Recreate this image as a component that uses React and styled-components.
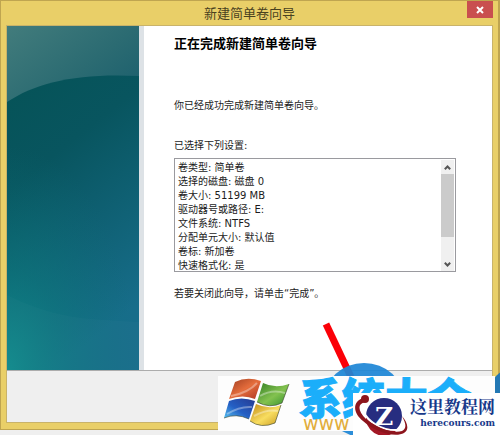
import React from 'react'
import styled, { createGlobalStyle } from 'styled-components'

const GlobalStyle = createGlobalStyle`
    *{
        box-sizing: border-box;
    }
    body{
        margin: 0;
        background: #efefef;
        color: #1c1c1c;
        font-family: "DejaVu Sans", "Noto Sans CJK SC", sans-serif;
        font-size: 10px;
        line-height: 14px;
    }
`;

const PageStyles = styled.div`
    position: relative;
    overflow: hidden;
    padding-bottom: 6px;
`;

const WindowStyles = styled.main`
    padding: 0 5px 6px;
    border: 1px solid #bfa550;
    border-right-width: 2px;
    background: #e9cf68;
`;

const TitleBar = styled.header`
    display: grid;
    grid-template-columns: 1fr auto 1fr;
    height: 25px;
    border-bottom: 1px solid #c9b36a;
    h1{
        margin: 0;
        padding-top: 2px;
        color: #4a421f;
        font-family: "Noto Sans CJK SC", sans-serif;
        font-size: 13px;
        font-weight: 400;
        line-height: 20px;
    }
`;

const CloseButton = styled.button`
    display: flex;
    align-items: center;
    justify-content: center;
    grid-column: 3;
    justify-self: end;
    width: 26px;
    height: 17px;
    padding: 0;
    border: 0;
    background: #c94f4f;
`;

const Client = styled.div`
    border: 0 solid #c9b36a;
    border-width: 0 1px 1px;
    background: #fff;
`;

const WizardBody = styled.div`
    display: flex;
    border-bottom: 1px solid #acacac;
`;

const BannerArt = styled.svg`
    flex: none;
    width: 137px;
    border-right: 5px solid #dde2e6;
    background: #fff;
`;

const WizardContent = styled.section`
    flex: 1;
    padding: 7px 36px 69px 30px;
    h2{
        margin: 0 0 46px;
        color: #000;
        font-family: "Noto Sans CJK SC", sans-serif;
        font-size: 13px;
        font-weight: 700;
        line-height: 20px;
    }
    p{
        margin: 0;
    }
    label{
        display: block;
        margin: 26px 0 5px;
    }
`;

const SettingsBox = styled.div`
    display: flex;
    height: 114px;
    margin-bottom: 15px;
    border: 1px solid #9a9a9f;
    textarea{
        flex: 1;
        min-width: 0;
        padding: 2px 3px 0;
        border: 0;
        outline: 0;
        resize: none;
        overflow: hidden;
        background: #fff;
        color: inherit;
        font: inherit;
    }
`;

const ScrollBar = styled.div`
    display: flex;
    flex-direction: column;
    width: 13px;
    margin: 1px 1px 0 0;
    background: #f0f0f0;
`;

const ScrollButton = styled.button`
    display: flex;
    align-items: center;
    justify-content: center;
    height: 14px;
    padding: 0;
    border: 0;
    background: transparent;
`;

const ScrollTrack = styled.div`
    flex: 1;
    &::before{
        content: "";
        display: block;
        height: 76%;
        background: #cbcbcb;
    }
`;

const WizardFooter = styled.footer`
    height: 51px;
    background: #efefef;
`;

const PointerArt = styled.svg`
    position: absolute;
    right: 0;
    bottom: 0;
    width: 180px;
    height: 115px;
`;

const SiteMark = styled.div`
    position: absolute;
    right: 5px;
    bottom: 5px;
    display: flex;
    width: 277px;
    height: 55px;
    padding-left: 5px;
    overflow: hidden;
    background: #fdfdfd;
    white-space: nowrap;
    svg{
        flex: none;
    }
`;

const SiteName = styled.div`
    margin-left: 8px;
    color: #1baefa;
    font-family: "Noto Sans CJK SC", sans-serif;
    font-size: 43px;
    font-weight: 900;
    line-height: 40px;
    -webkit-text-stroke: 1px #1baefa;
    small{
        display: block;
        padding-left: 4px;
        color: #e2ad3c;
        font-family: "DejaVu Sans", sans-serif;
        font-size: 19px;
        font-weight: 400;
        line-height: 14px;
        -webkit-text-stroke: 0;
    }
`;

const CourseMark = styled.div`
    position: absolute;
    right: 0;
    bottom: 0;
    display: flex;
    width: 147px;
    height: 43px;
    background: #fff;
    svg{
        flex: none;
    }
`;

const CourseName = styled.div`
    flex: 1;
    padding-top: 3px;
    color: #17398a;
    font-family: "Noto Serif CJK SC", "Noto Sans CJK SC", serif;
    font-size: 17px;
    font-weight: 700;
    line-height: 20px;
    text-align: right;
    padding-right: 5px;
    white-space: nowrap;
    small{
        display: block;
        font-family: "DejaVu Serif", serif;
        font-size: 9px;
        line-height: 14px;
    }
`;

const settings = [
  '卷类型: 简单卷',
  '选择的磁盘: 磁盘 0',
  '卷大小: 51199 MB',
  '驱动器号或路径: E:',
  '文件系统: NTFS',
  '分配单元大小: 默认值',
  '卷标: 新加卷',
  '快速格式化: 是',
]

function Banner() {
  return (
    <BannerArt viewBox="0 0 132 344" preserveAspectRatio="none" aria-hidden="true">
        <defs>
            <linearGradient id="sky" x1="0" y1="0" x2="1" y2="1">
                <stop offset="0" stopColor="#427c7c"/>
                <stop offset=".5" stopColor="#2b6b72"/>
                <stop offset="1" stopColor="#14596b"/>
            </linearGradient>
            <linearGradient id="hill" x1="0" y1="0" x2=".35" y2="1">
                <stop offset="0" stopColor="#055357"/>
                <stop offset=".35" stopColor="#08555f"/>
                <stop offset="1" stopColor="#176d8a"/>
            </linearGradient>
            <radialGradient id="glow" cx="0" cy="1" r="1">
                <stop offset="0" stopColor="#118a8c"/>
                <stop offset=".45" stopColor="#0c8080" stopOpacity=".45"/>
                <stop offset="1" stopColor="#0c7078" stopOpacity="0"/>
            </radialGradient>
        </defs>
        <rect width="132" height="100" fill="url(#sky)"/>
        <path d="M0 76C30 56 71 47 132 50V344H0Z" fill="url(#hill)"/>
        <rect y="120" width="132" height="224" fill="url(#glow)"/>
        <path d="M0 269Q42 290 85 293T132 296V344H0Z" fill="#fff" opacity=".02"/>
    </BannerArt>
  )
}

function Chevron({ down }) {
  return (
    <svg width="7" height="5" viewBox="0 0 7 5" aria-hidden="true">
        <path d={down ? 'M.8 .8 3.5 3.5 6.2 .8' : 'M.8 4.2 3.5 1.5 6.2 4.2'} fill="none" stroke="#555" strokeWidth="2"/>
    </svg>
  )
}

function FlagLogo() {
  return (
    <svg width="68" height="55" viewBox="0 0 68 55" aria-hidden="true">
        <defs>
            <linearGradient id="red" x1="0" y1="0" x2="1" y2="1">
                <stop offset="0" stopColor="#9d3c20"/>
                <stop offset=".5" stopColor="#e56d3c"/>
                <stop offset="1" stopColor="#ad3521"/>
            </linearGradient>
            <linearGradient id="green" x1="0" y1="0" x2="1" y2="1">
                <stop offset="0" stopColor="#347f25"/>
                <stop offset=".55" stopColor="#83c24f"/>
                <stop offset="1" stopColor="#2f8e2a"/>
            </linearGradient>
            <linearGradient id="blue" x1="0" y1="1" x2="1" y2="0">
                <stop offset="0" stopColor="#57c4f2"/>
                <stop offset=".45" stopColor="#245fc4"/>
                <stop offset="1" stopColor="#263a91"/>
            </linearGradient>
            <linearGradient id="yellow" x1="0" y1="0" x2="1" y2="1">
                <stop offset="0" stopColor="#c18a16"/>
                <stop offset=".55" stopColor="#f8dd60"/>
                <stop offset="1" stopColor="#c89a20"/>
            </linearGradient>
        </defs>
        <path d="M12 6Q24 0 38 5L32 23Q20 18 6 23Z" fill="url(#red)"/>
        <path d="M40 7Q52 13 66 8L59 27Q47 33 34 26Z" fill="url(#green)"/>
        <path d="M6 25Q18 20 32 25L26 43Q13 37 1 42Z" fill="url(#blue)"/>
        <path d="M33 28Q46 34 58 29L52 47Q38 53 27 45Z" fill="url(#yellow)"/>
        <path d="M1 42Q13 37 26 43M27 45Q38 53 52 47L58 29M59 27 66 8M34 26Q47 33 59 27" fill="none" stroke="#37402a" strokeOpacity=".6"/>
        <path d="M8 20Q25 17 34 7M37 20Q49 13 62 17M4 38Q17 30 29 31M31 40Q44 33 55 35" fill="none" stroke="#fff" strokeOpacity=".35" strokeWidth="2"/>
    </svg>
  )
}

function OrbitLogo() {
  return (
    <svg width="57" height="43" viewBox="0 0 57 43" aria-hidden="true">
        <circle cx="31" cy="23" r="18" fill="#272d80"/>
        <path d="M13 24Q25 38 45 36A18 18 0 0 1 13 27Z" fill="#a31826"/>
        <text x="31" y="32" fill="#fff" fontFamily="DejaVu Serif, serif" fontSize="25" fontWeight="700" textAnchor="middle">Z</text>
        <path d="M10 18C15 29 29 38 45 37" fill="none" stroke="#fff" strokeWidth="2"/>
        <path d="M10 5C-1 9 0 20 10 28C22 39 42 45 51 40C57 36 54 29 49 23C53 31 54 35 49 38C40 41 24 35 13 26C5 18 4 11 12 9Z" fill="#8d151d"/>
        <circle cx="12" cy="6" r="4" fill="#8d151d"/>
    </svg>
  )
}

export default function App() {
  return (
    <PageStyles>
        <GlobalStyle/>
        <WindowStyles>
            <TitleBar>
                <span/>
                <h1>新建简单卷向导</h1>
                <CloseButton type="button" aria-label="关闭">
                    <svg width="8" height="8" viewBox="0 0 8 8" aria-hidden="true">
                        <path d="M1 1 7 7M7 1 1 7" stroke="#fff" strokeWidth="2"/>
                    </svg>
                </CloseButton>
            </TitleBar>
            <Client>
                <WizardBody>
                    <Banner/>
                    <WizardContent>
                        <h2>正在完成新建简单卷向导</h2>
                        <p>你已经成功完成新建简单卷向导。</p>
                        <label htmlFor="settings">已选择下列设置:</label>
                        <SettingsBox>
                            <textarea id="settings" readOnly value={settings.join('\n')}/>
                            <ScrollBar>
                                <ScrollButton type="button" aria-label="向上滚动"><Chevron/></ScrollButton>
                                <ScrollTrack/>
                                <ScrollButton type="button" aria-label="向下滚动"><Chevron down/></ScrollButton>
                            </ScrollBar>
                        </SettingsBox>
                        <p>若要关闭此向导，请单击“完成”。</p>
                    </WizardContent>
                </WizardBody>
                <WizardFooter/>
            </Client>
        </WindowStyles>
        <PointerArt viewBox="0 0 180 115" aria-hidden="true">
            <path d="M6 3 31 56" stroke="#fb0007" strokeWidth="7"/>
            <ellipse cx="44" cy="79" rx="40" ry="37" fill="#1e86d6" opacity=".93"/>
            <circle cx="202" cy="80" r="36" fill="#2378b4"/>
        </PointerArt>
        <SiteMark>
            <FlagLogo/>
            <SiteName>系统大全<small>www</small></SiteName>
        </SiteMark>
        <CourseMark>
            <OrbitLogo/>
            <CourseName>这里教程网<small>herecours.com</small></CourseName>
        </CourseMark>
    </PageStyles>
  )
}
